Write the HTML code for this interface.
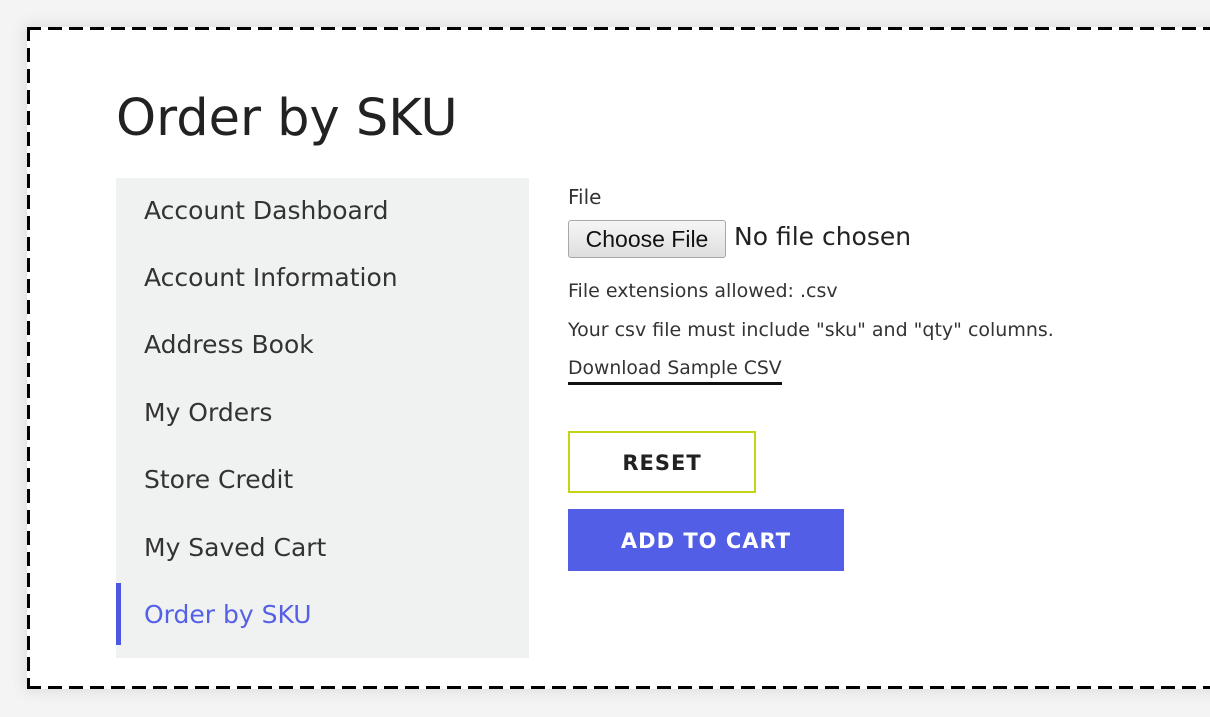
<!DOCTYPE html>
<html><head><meta charset="utf-8"><style>
html,body{margin:0;padding:0}
body{width:1210px;height:717px;background:#f4f4f4;position:relative;overflow:hidden;font-family:"DejaVu Sans","Liberation Sans",sans-serif;color:#222}
.frame{position:absolute;left:27px;top:27px;width:1200px;height:662px;background:#fff;box-shadow:0 0 12px 4px #e2e2e2;border-radius:3px}
.dt{position:absolute;left:27px;top:27px;width:1200px;height:3px;background:repeating-linear-gradient(90deg,#000 0 14px,transparent 14px 21px)}
.db{position:absolute;left:27px;top:686px;width:1200px;height:3px;background:repeating-linear-gradient(90deg,#000 0 14px,transparent 14px 21px)}
.dl{position:absolute;left:27px;top:27px;width:3px;height:662px;background:repeating-linear-gradient(180deg,#000 0 14px,transparent 14px 21px)}
h1{position:absolute;left:116px;top:88px;margin:0;font-weight:normal;font-size:51px;line-height:62px;color:#222}
.side{position:absolute;left:116px;top:178px;width:413px;height:480px;background:#f0f2f1}
.side div{position:absolute;left:28px;font-size:25px;line-height:30px;color:#333;white-space:nowrap}
.side .act{color:#5560e6}
.bar{position:absolute;left:0;top:405px;width:5px;height:62px;background:#4d57e4}
.lbl{position:absolute;left:568px;top:185px;font-size:20px;color:#333}
.btnf{position:absolute;left:568px;top:220px;width:156px;height:36px;border:1px solid #a8a8a8;border-radius:3px;background:linear-gradient(#f6f6f6,#dedede);font-family:"Liberation Sans",sans-serif;font-size:23px;line-height:36px;text-align:center;color:#111}
.nf{position:absolute;left:734px;top:222px;font-size:25px;color:#222;white-space:nowrap}
.s{position:absolute;left:568px;font-size:19px;color:#333;white-space:nowrap}
.dl2{position:absolute;left:568px;top:356px;font-size:18.8px;color:#333;border-bottom:3px solid #111;padding-bottom:0;line-height:26px;white-space:nowrap}
.reset{position:absolute;left:568px;top:431px;width:184px;height:58px;border:2px solid #c4d416;background:#fff;text-align:center;line-height:60px;font-weight:bold;font-size:21px;letter-spacing:1px;color:#222}
.add{position:absolute;left:568px;top:509px;width:276px;height:62px;background:#525ee6;text-align:center;line-height:64px;font-weight:bold;font-size:21px;letter-spacing:1px;color:#fff}
</style></head><body>
<div class="frame"></div>
<div class="dt"></div><div class="db"></div><div class="dl"></div>
<h1>Order by SKU</h1>
<div class="side">
<div style="top:18px">Account Dashboard</div>
<div style="top:85px">Account Information</div>
<div style="top:152px">Address Book</div>
<div style="top:220px">My Orders</div>
<div style="top:287px">Store Credit</div>
<div style="top:355px">My Saved Cart</div>
<div class="act" style="top:422px">Order by SKU</div>
<span class="bar"></span>
</div>
<div class="lbl">File</div>
<div class="btnf">Choose File</div>
<div class="nf">No file chosen</div>
<div class="s" style="top:280px">File extensions allowed: .csv</div>
<div class="s" style="top:319px">Your csv file must include "sku" and "qty" columns.</div>
<div class="dl2">Download Sample CSV</div>
<div class="reset">RESET</div>
<div class="add">ADD TO CART</div>
</body></html>
